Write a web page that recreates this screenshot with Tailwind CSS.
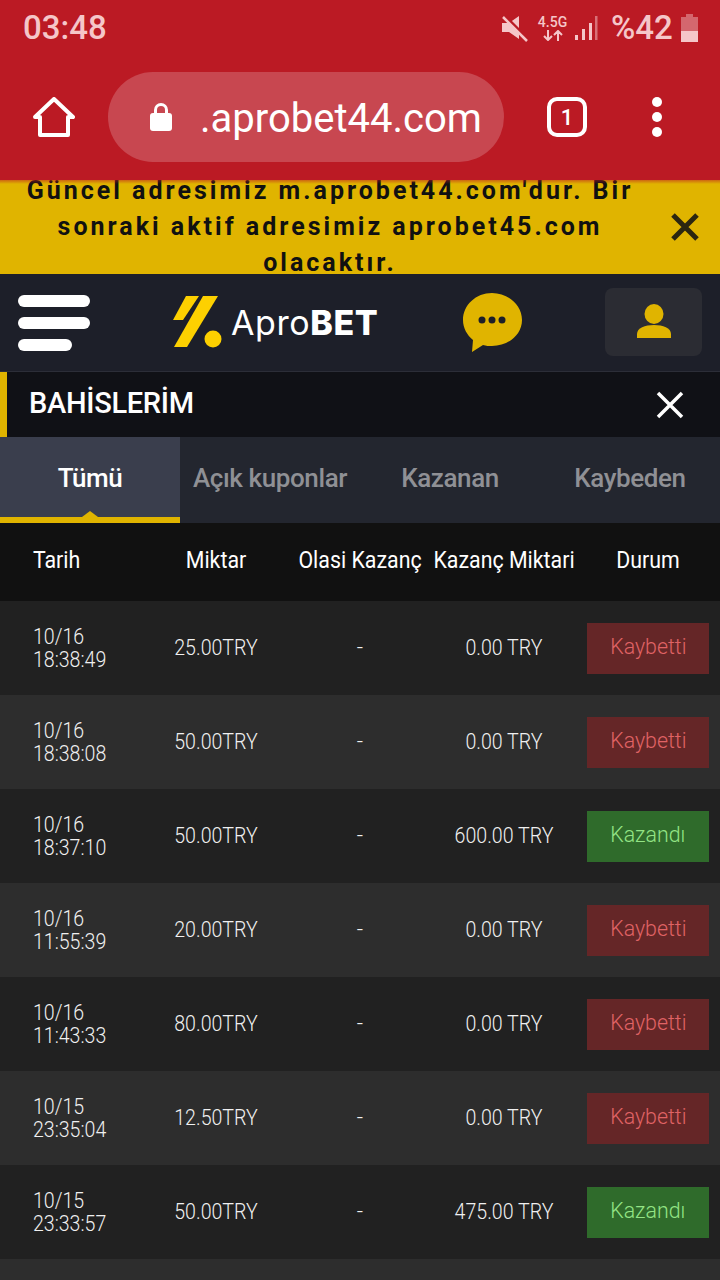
<!DOCTYPE html>
<html lang="tr">
<head>
    <meta charset="UTF-8">
    <meta name="viewport" content="width=device-width, initial-scale=1.0">
    <title>Bahislerim</title>
    <script src="https://cdn.jsdelivr.net/npm/@tailwindcss/browser@4"></script>
</head>
<body class="w-[720px] h-[1280px] overflow-hidden bg-[#212121] font-['Roboto',sans-serif]">

    <!-- status bar + browser bar -->
    <div class="h-[180px] bg-[#bb1a24]">
        <div class="h-[54px] flex items-center pl-[23px] pr-[21px] pt-[2px] text-[#f5c6c9]">
            <span class="text-[33px] font-medium">03:48</span>
            <div class="ml-auto flex items-center">
                <svg width="27" height="27" viewBox="0 0 27 27" fill="#f5c6c9">
                    <path d="M1 8h7l10-7v23l-10-7H1z"/>
                    <path d="M3 0l24 24" stroke="#bb1a24" stroke-width="3"/>
                    <path d="M2 2l24 24" stroke="#f5c6c9" stroke-width="2.5"/>
                </svg>
                <div class="ml-[10px] w-[29px] flex flex-col items-center">
                    <span class="text-[14px] leading-[15px] font-medium">4.5G</span>
                    <svg width="20" height="11" viewBox="0 0 20 11" fill="none" stroke="#f5c6c9" stroke-width="2">
                        <path d="M5 0v10M1 6l4 4 4-4M15 11V1M11 5l4-4 4 4"/>
                    </svg>
                </div>
                <svg class="ml-[7px]" width="24" height="28" viewBox="0 0 24 28" fill="#f5c6c9">
                    <rect x="1" y="21" width="3" height="5"/>
                    <rect x="8" y="15" width="3" height="11"/>
                    <rect x="15" y="9" width="3" height="17"/>
                    <rect x="21" y="2" width="2.5" height="24" opacity="0.5"/>
                </svg>
                <span class="ml-[13px] w-[62px] text-[33px] font-medium">%42</span>
                <svg class="ml-[7px]" width="19" height="28" viewBox="0 0 19 28" fill="#f5c6c9">
                    <path d="M6 0h7v3h5v25H1V3h5z" opacity="0.45"/>
                    <path d="M1 17h17v11H1z"/>
                </svg>
            </div>
        </div>
        <div class="h-[90px] mt-[18px] flex items-center">
            <svg class="ml-[33px]" width="42" height="40" viewBox="0 0 42 40" fill="none" stroke="#fff" stroke-width="4" stroke-linejoin="round">
                <path d="M2 20L21 2l19 18h-5v18H7V20z"/>
            </svg>
            <div class="ml-[33px] w-[396px] h-[90px] rounded-full bg-[#c84750] flex items-center">
                <svg class="ml-[41px]" width="24" height="30" viewBox="0 0 24 30" fill="#fff">
                    <path d="M5 12V8a7 7 0 0 1 14 0v4h-3V8a4 4 0 0 0-8 0v4z"/>
                    <rect x="1" y="11" width="22" height="18" rx="3"/>
                </svg>
                <span class="ml-[27px] pt-[4px] text-[40px] leading-none text-white">.aprobet44.com</span>
            </div>
            <div class="ml-[43px] w-[40px] h-[40px] rounded-[10px] border-[4px] border-white flex items-center justify-center text-white text-[22px] font-medium">1</div>
            <div class="ml-[65px] flex flex-col gap-[5px]">
                <span class="w-[10px] h-[10px] rounded-full bg-white"></span>
                <span class="w-[10px] h-[10px] rounded-full bg-white"></span>
                <span class="w-[10px] h-[10px] rounded-full bg-white"></span>
            </div>
        </div>
    </div>

    <!-- notice banner -->
    <div class="h-[94px] bg-[#e0b400] flex items-center overflow-hidden relative">
        <div class="absolute top-0 inset-x-0 h-[4px] bg-linear-to-b from-[#bb1a24]/50 to-transparent"></div>
        <p class="w-[660px] text-center text-[25px] leading-[36px] font-bold tracking-[3px] text-[#111]">Güncel adresimiz m.aprobet44.com'dur. Bir sonraki aktif adresimiz aprobet45.com olacaktır.</p>
        <svg class="ml-[10px]" width="30" height="30" viewBox="0 0 30 30" stroke="#2b2610" stroke-width="5" fill="none">
            <path d="M3 3l24 24M27 3L3 27"/>
        </svg>
    </div>

    <!-- site header -->
    <div class="h-[98px] bg-[#1d1f29] border-b border-[#2c2e38] flex items-center pb-[2px]">
        <div class="ml-[18px] w-[72px] flex flex-col gap-[10px] mt-[2px]">
            <span class="block w-[72px] h-[12px] rounded-full bg-white"></span>
            <span class="block w-[72px] h-[12px] rounded-full bg-white"></span>
            <span class="block w-[54px] h-[12px] rounded-full bg-white"></span>
        </div>
        <div class="ml-[82px] w-[207px] flex items-center">
            <svg width="50" height="54" viewBox="0 0 50 54" fill="#fdd000">
                <path d="M14 1h13L11 25H1z"/>
                <path d="M31 1h15L15 52H2z"/>
                <circle cx="41" cy="44" r="8.5"/>
            </svg>
            <span class="ml-[9px] pt-[2px] text-[34px] leading-none text-white font-['Inter',sans-serif] tracking-[0.6px] whitespace-nowrap">Apro<span class="font-extrabold">BET</span></span>
        </div>
        <svg class="ml-[83px]" width="60" height="60" viewBox="0 0 60 60" fill="#e0b400">
            <path d="M30 1c16 0 30 12 30 27S46 54 30 54c-3 0-6 0-9-1L10 60l1-12C5 43 1 36 1 28 1 13 14 1 30 1z"/>
            <circle cx="20" cy="28" r="3.5" fill="#1d1f29"/>
            <circle cx="30" cy="28" r="3.5" fill="#1d1f29"/>
            <circle cx="40" cy="28" r="3.5" fill="#1d1f29"/>
        </svg>
        <div class="ml-[83px] w-[97px] h-[68px] rounded-[8px] bg-[#2b2c33] flex items-center justify-center">
            <svg width="36" height="36" viewBox="0 0 36 36" fill="#e0b400">
                <ellipse cx="18" cy="10" rx="9.5" ry="10"/>
                <path d="M1 34v-4c0-6 8-9 17-9s17 3 17 9v4z"/>
            </svg>
        </div>
    </div>

    <!-- title -->
    <div class="h-[65px] bg-[#101116] border-l-[7px] border-[#e0b400] flex items-center justify-between pl-[22px] pr-[36px]">
        <span class="text-[29px] font-medium text-white tracking-[-0.3px] pb-[2px]">BAHİSLERİM</span>
        <svg width="28" height="28" viewBox="0 0 28 28" stroke="#fff" stroke-width="3.5" fill="none">
            <path d="M2 2l24 24M26 2L2 26"/>
        </svg>
    </div>

    <!-- tabs -->
    <div class="h-[86px] bg-[#23262f] grid grid-cols-4 text-[26px] font-medium text-[#8f9095] tracking-[-0.4px]">
        <div class="relative bg-[#3a3e4d] border-b-[6px] border-[#e0b400] flex items-center justify-center text-white pt-[2px]">
            Tümü
            <span class="absolute bottom-0 left-[82px] w-0 h-0 border-x-[8px] border-x-transparent border-b-[6px] border-b-[#e0b400]"></span>
        </div>
        <div class="flex items-center justify-center pb-[4px]">Açık kuponlar</div>
        <div class="flex items-center justify-center pb-[4px]">Kazanan</div>
        <div class="flex items-center justify-center pb-[4px]">Kaybeden</div>
    </div>

    <!-- bet table -->
    <div class="h-[78px] bg-[#111111] grid grid-cols-5 items-center text-center text-[24px] text-white pb-[5px]">
        <div class="pl-[37px] origin-left scale-x-[.89] text-left">Tarih</div>
        <div class="scale-x-[.89]">Miktar</div>
        <div class="flex justify-center scale-x-[.89] whitespace-nowrap">Olasi Kazanç</div>
        <div class="flex justify-center scale-x-[.89] whitespace-nowrap">Kazanç Miktari</div>
        <div class="scale-x-[.89]">Durum</div>
    </div>

    <div id="bet-rows"></div>

    <script>
        const bets = [
            { day: '10/16', time: '18:38:49', amount: '25.00TRY', payout: '0.00 TRY', won: false },
            { day: '10/16', time: '18:38:08', amount: '50.00TRY', payout: '0.00 TRY', won: false },
            { day: '10/16', time: '18:37:10', amount: '50.00TRY', payout: '600.00 TRY', won: true },
            { day: '10/16', time: '11:55:39', amount: '20.00TRY', payout: '0.00 TRY', won: false },
            { day: '10/16', time: '11:43:33', amount: '80.00TRY', payout: '0.00 TRY', won: false },
            { day: '10/15', time: '23:35:04', amount: '12.50TRY', payout: '0.00 TRY', won: false },
            { day: '10/15', time: '23:33:57', amount: '50.00TRY', payout: '475.00 TRY', won: true },
            { day: '', time: '', amount: '', payout: '', won: null }
        ];

        document.getElementById('bet-rows').innerHTML = bets.map((bet, i) => {
            const stripe = i % 2 ? 'bg-[#2d2d2d]' : 'bg-[#212121]';
            if (bet.won === null) return `<div class="h-[21px] ${stripe}"></div>`;
            const badge = bet.won
                ? '<div class="w-[122px] h-[51px] ml-[11px] pb-[3px] bg-[#2f6b2b] text-[#93e485] flex items-center justify-center"><span class="scale-x-[.97]">Kazandı</span></div>'
                : '<div class="w-[122px] h-[51px] ml-[11px] pb-[3px] bg-[#652627] text-[#e06365] flex items-center justify-center"><span class="scale-x-[.97]">Kaybetti</span></div>';
            return `<div class="h-[94px] ${stripe} grid grid-cols-5 items-center text-center text-[22px] font-light leading-[23px] text-[#f0f0f0]">
                <div class="pl-[37px] origin-left scale-x-[.89] text-left">${bet.day}<br>${bet.time}</div>
                <div class="pb-[2px] scale-x-[.89]">${bet.amount}</div>
                <div class="pb-[2px]">-</div>
                <div class="pb-[2px] scale-x-[.89]">${bet.payout}</div>
                ${badge}
            </div>`;
        }).join('');
    </script>
</body>
</html>
